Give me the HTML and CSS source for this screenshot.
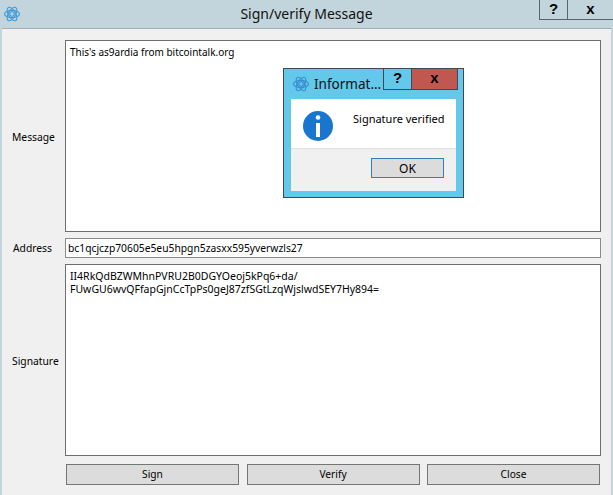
FILE: index.html
```html
<!DOCTYPE html>
<html lang="en">
<head>
<meta charset="utf-8">
<title>Sign/verify Message</title>
<link rel="stylesheet" href="styles.css">
</head>
<body>
<div class="window">
  <header class="titlebar">
    <svg class="logo" viewBox="0 0 16 16" width="16" height="16"><g fill="none" stroke="#3d9bdc" stroke-width="1.1"><ellipse cx="8" cy="8" rx="7.5" ry="3.6"/><ellipse cx="8" cy="8" rx="7.5" ry="3.6" transform="rotate(60 8 8)"/><ellipse cx="8" cy="8" rx="7.5" ry="3.6" transform="rotate(120 8 8)"/><circle cx="8" cy="8" r="2.2"/></g></svg>
    <div class="title">Sign/verify Message</div>
    <div class="caption-buttons">
      <div class="cap cap-help">?</div>
      <div class="cap cap-close">x</div>
    </div>
  </header>
  <main class="panel">
    <div class="label">Message</div>
    <div class="field area msg-text">This's as9ardia from bitcointalk.org</div>
    <div class="label label-address">Address</div>
    <div class="field line">bc1qcjczp70605e5eu5hpgn5zasxx595yverwzls27</div>
    <div class="label">Signature</div>
    <div class="field area sig-text">II4RkQdBZWMhnPVRU2B0DGYOeoj5kPq6+da/<br>FUwGU6wvQFfapGjnCcTpPs0geJ87zfSGtLzqWjslwdSEY7Hy894=</div>
    <div class="actions">
      <button class="btn">Sign</button>
      <button class="btn">Verify</button>
      <button class="btn">Close</button>
    </div>
  </main>
</div>
<div class="dialog">
  <div class="dialog-bar">
    <svg class="dialog-logo" viewBox="0 0 16 16" width="16" height="16"><g fill="none" stroke="#3a8fd0" stroke-width="1.1"><ellipse cx="8" cy="8" rx="7.5" ry="3.6"/><ellipse cx="8" cy="8" rx="7.5" ry="3.6" transform="rotate(60 8 8)"/><ellipse cx="8" cy="8" rx="7.5" ry="3.6" transform="rotate(120 8 8)"/><circle cx="8" cy="8" r="2.2"/></g></svg>
    <div class="dialog-title">Informat...</div>
    <div class="dialog-caps">
      <div class="dcap dcap-help">?</div>
      <div class="dcap dcap-close">x</div>
    </div>
  </div>
  <div class="dialog-body">
    <div class="dialog-msg">
      <svg class="info" viewBox="0 0 30 30" width="30" height="30"><circle cx="15" cy="15" r="15" fill="#1976cf"/><circle cx="15" cy="6.5" r="2.3" fill="#fff"/><rect x="13" y="12" width="4" height="14" fill="#fff"/></svg>
      <div class="dialog-text">Signature verified</div>
    </div>
    <div class="dialog-foot"><button class="ok">OK</button></div>
  </div>
</div>
</body>
</html>
```
FILE: styles.css
```css
html, body { margin: 0; padding: 0; }
body { width: 613px; height: 495px; overflow: hidden; position: relative; font-family: "Noto Sans", sans-serif; font-size: 10.3px; color: #000; }
.window { height: 495px; display: flex; flex-direction: column; background: #c3d5dc; box-sizing: border-box; padding: 0 2px; }
.titlebar { height: 28px; flex: none; display: flex; align-items: center; position: relative; margin: 0 -2px; padding-left: 4px; }
.logo { flex: none; }
.title { position: absolute; left: 0; right: 0; top: 4px; text-align: center; font-size: 14px; line-height: 20px; color: #111; }
.caption-buttons { position: absolute; right: 0; top: 0; display: flex; }
.cap { height: 19px; border: solid #55666e; border-width: 0 0 1px 1px; text-align: center; font: bold 15px/18px "Liberation Sans", sans-serif; }
.cap-help { width: 27px; }
.cap-close { width: 45px; }
.panel { flex: 1; background: #f0f0f0; border-top: 1px solid #a5adb2; display: grid; grid-template-columns: 53px 1fr; grid-template-rows: 192px 20px 192px 21px; row-gap: 6px; padding: 11px 10px 0; align-content: start; }
.label { align-self: center; padding-top: 2px; }
.label-address { padding-top: 0; padding-left: 1px; }
.field { background: #fff; border: 1px solid #6e6e6e; box-sizing: border-box; }
.area { padding: 5px 4px 4px; line-height: 13px; }
.msg-text { font-size: 10px; }
.sig-text { font-size: 10.5px; }
.line { padding: 0 2px; line-height: 18px; font-size: 10.3px; white-space: nowrap; overflow: hidden; border-color: #8a8a8a; }
.actions { grid-column: 2; display: flex; gap: 7.5px; margin: 2px 1px 0; }
.btn { flex: 1; background: #dcdcdc; border: 1px solid #757575; font: inherit; font-size: 10.2px; padding: 0 0 2px; height: 21px; }
.dialog { position: absolute; left: 283px; top: 68px; width: 181px; height: 130px; box-sizing: border-box; background: #63c8ea; border: 1px solid #3d4a50; display: flex; flex-direction: column; }
.dialog-bar { height: 30px; flex: none; display: flex; align-items: center; position: relative; padding-left: 9px; }
.dialog-title { font-size: 13.5px; margin-left: 5px; color: #111; }
.dialog-caps { position: absolute; right: 5px; top: 0; display: flex; }
.dcap { height: 20px; border: solid #3d4a50; border-width: 0 0 1px 1px; text-align: center; font: bold 15px/18px "Liberation Sans", sans-serif; }
.dcap-help { width: 27px; }
.dcap-close { width: 45px; background: #c1584f; border-right: 1px solid #3d4a50; }
.dialog-body { flex: 1; margin: 0 7px 6px; display: flex; flex-direction: column; background: #f0f0f0; }
.dialog-msg { height: 50px; flex: none; box-sizing: border-box; background: #fff; border-bottom: 1px solid #dfdfdf; display: flex; align-items: flex-start; padding: 12px 0 0 12px; }
.dialog-text { margin: 1px 0 0 20px; line-height: 13px; font-size: 11px; white-space: nowrap; }
.info { flex: none; }
.dialog-foot { flex: 1; display: flex; justify-content: flex-end; align-items: flex-start; padding: 9px 12px 0 0; }
.ok { width: 73px; height: 20px; background: #dcdcdc; border: 1px solid #3a7ead; font: inherit; font-size: 12px; padding: 0; }
```
